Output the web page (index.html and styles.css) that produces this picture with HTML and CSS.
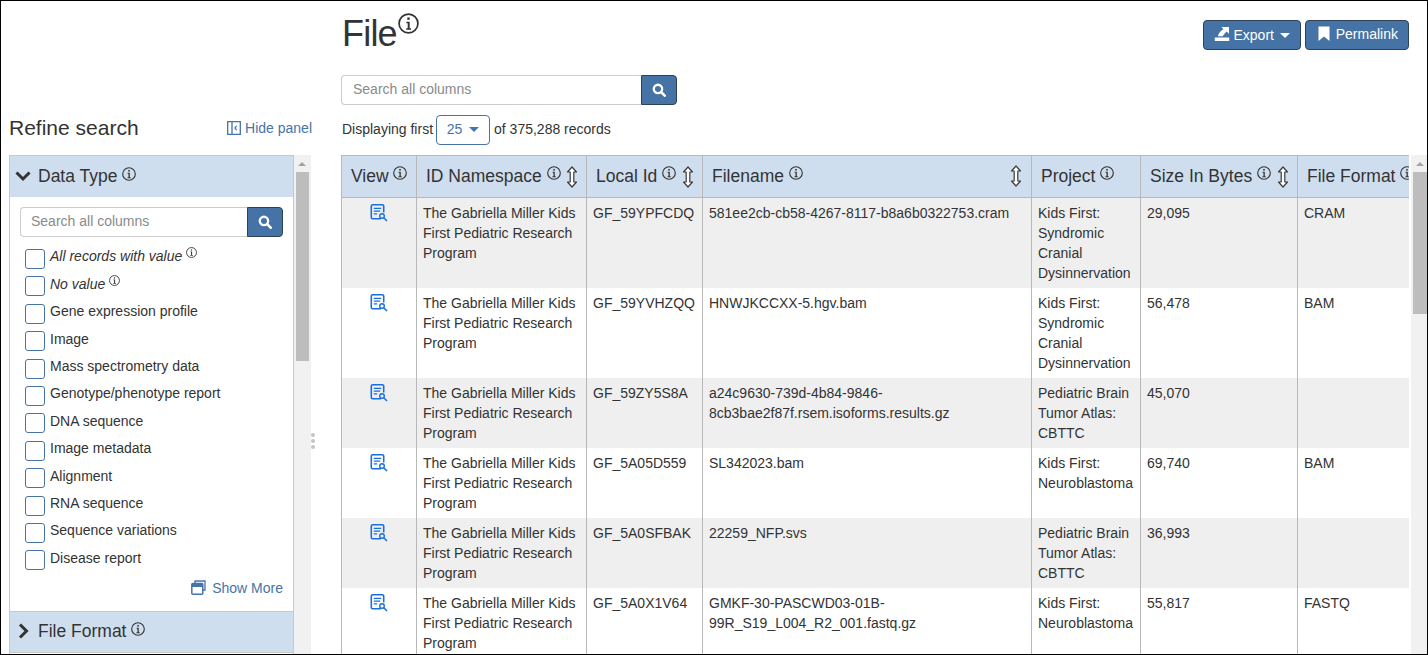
FILE: index.html
```html
<!DOCTYPE html>
<html lang="en">
<head>
    <meta charset="UTF-8">
    <meta name="viewport" content="width=device-width, initial-scale=1.0">
    <title>File</title>
    <link rel="stylesheet" href="styles.css">
</head>
<body>
    <svg class="sprites" width="0" height="0">
        <symbol id="info" viewBox="0 0 16 16">
            <circle cx="8" cy="8" r="7.2" fill="none" stroke="currentColor" stroke-width="1.3"/>
            <rect x="7.1" y="3.4" width="1.8" height="1.8" fill="currentColor"/>
            <path d="M6.4 6.7h2.5v5h1v1.1H6.3v-1.1h1.1V7.8h-1z" fill="currentColor"/>
        </symbol>
        <symbol id="sort" viewBox="0 0 12 22">
            <path d="M6 1 1.500 6h2.700v10H1.500L6 21l4.500-5H7.800V6h2.700z" fill="#fff" stroke="#3a3a3a" stroke-width="1.200" stroke-linejoin="round"/>
        </symbol>
        <symbol id="search" viewBox="0 0 16 16">
            <circle cx="6.800" cy="6.800" r="4.800" fill="none" stroke="currentColor" stroke-width="2.600"/>
            <path d="m10.500 10.500 4 4" stroke="currentColor" stroke-width="3" stroke-linecap="round"/>
        </symbol>
        <symbol id="doc" viewBox="0 0 18 18">
            <path d="M11 14.800H2.600a1.300 1.300 0 0 1-1.300-1.300V1.900A1.300 1.300 0 0 1 2.600.8h9.800a1.300 1.300 0 0 1 1.300 1.100v6.500" fill="none" stroke="#1a6fe0" stroke-width="1.600"/>
            <path d="M3.800 4.400h7.400M3.800 7.100h6.400M3.800 9.800h3.400" stroke="#1a6fe0" stroke-width="1.300"/>
            <circle cx="12" cy="12" r="2.300" fill="none" stroke="#1a6fe0" stroke-width="1.400"/>
            <path d="m13.700 13.700 3.300 3.300" stroke="#1a6fe0" stroke-width="1.600"/>
        </symbol>
    </svg>

    <div class="page">
        <aside class="sidebar">
            <div class="refine-head">
                <h2 class="refine-title">Refine search</h2>
                <a class="link hide-panel">
                    <svg class="ico-14" viewBox="0 0 14 14"><path d="M.7.7h12.600v12.600H.7zM5 .7v12.600" fill="none" stroke="#4674a9" stroke-width="1.300"/><path d="M9.700 5 7.800 7l1.900 2" fill="none" stroke="#4674a9" stroke-width="1.100"/></svg>
                    Hide panel
                </a>
            </div>
            <div class="facet-wrap">
                <div class="facets">
                    <div class="facet-head">
                        <svg class="chev" viewBox="0 0 16 16"><path d="M1.500 4.500 8 11l6.500-6.500" fill="none" stroke="#333" stroke-width="3"/></svg>
                        <span>Data Type</span>
                        <svg class="info-h"><use href="#info"/></svg>
                    </div>
                    <div class="facet-body">
                        <div class="search-group small">
                            <input class="search-input" type="text" placeholder="Search all columns">
                            <button class="search-btn"><svg class="ico-14"><use href="#search"/></svg></button>
                        </div>
                        <ul class="options">
                            <li><span class="check"></span><span><em>All records with value</em> <svg class="info-s"><use href="#info"/></svg></span></li>
                            <li><span class="check"></span><span><em>No value</em> <svg class="info-s"><use href="#info"/></svg></span></li>
                            <li><span class="check"></span><span>Gene expression profile</span></li>
                            <li><span class="check"></span><span>Image</span></li>
                            <li><span class="check"></span><span>Mass spectrometry data</span></li>
                            <li><span class="check"></span><span>Genotype/phenotype report</span></li>
                            <li><span class="check"></span><span>DNA sequence</span></li>
                            <li><span class="check"></span><span>Image metadata</span></li>
                            <li><span class="check"></span><span>Alignment</span></li>
                            <li><span class="check"></span><span>RNA sequence</span></li>
                            <li><span class="check"></span><span>Sequence variations</span></li>
                            <li><span class="check"></span><span>Disease report</span></li>
                        </ul>
                        <a class="link show-more">
                            <svg class="ico-15" viewBox="0 0 15 15"><path d="M4 3V1h10v9h-2" fill="none" stroke="#4674a9" stroke-width="1.300"/><rect x=".8" y="3.500" width="11" height="10.700" rx="1" fill="none" stroke="#4674a9" stroke-width="1.500"/><rect x=".8" y="3.500" width="11" height="3.500" fill="#4674a9"/></svg>
                            Show More
                        </a>
                    </div>
                    <div class="facet-head closed">
                        <svg class="chev" viewBox="0 0 16 16"><path d="M5 1.500 11.500 8 5 14.500" fill="none" stroke="#333" stroke-width="3"/></svg>
                        <span>File Format</span>
                        <svg class="info-h"><use href="#info"/></svg>
                    </div>
                </div>
                <div class="scrollbar side-bar">
                    <span class="arrow"></span>
                    <span class="thumb"></span>
                </div>
            </div>
            <div class="drag-dots"><i></i><i></i><i></i></div>
        </aside>

        <main class="main">
            <div class="title-row">
                <h1 class="title">File<svg class="info-t"><use href="#info"/></svg></h1>
                <div class="actions">
                    <button class="btn">
                        <svg class="ico-16 export" viewBox="0 0 16 16"><path d="M.8 11.500h14.400V15H.8zM7.500 1H15v6.800l-2.500-2.400L8.500 10.300H4c.4-2.900 2.100-5.300 5.400-7.100z" fill="#fff"/></svg>
                        Export <span class="caret"></span>
                    </button>
                    <button class="btn">
                        <svg class="ico-16" viewBox="0 0 12 16"><path d="M.5.500h11V15L6 10.500.5 15z" fill="#fff"/></svg>
                        <span class="btn-up">Permalink</span>
                    </button>
                </div>
            </div>
            <div class="search-group large">
                <input class="search-input" type="text" placeholder="Search all columns">
                <button class="search-btn"><svg class="ico-14"><use href="#search"/></svg></button>
            </div>
            <div class="display-row">
                <span>Displaying first</span>
                <span class="page-size">25 <span class="caret blue"></span></span>
                <span>of 375,288 records</span>
            </div>
            <div class="table-wrap">
                <div class="table-clip">
                    <table class="results">
                        <colgroup>
                            <col class="c-view"><col class="c-ns"><col class="c-id"><col class="c-file"><col class="c-proj"><col class="c-size"><col class="c-format">
                        </colgroup>
                        <thead>
                            <tr>
                                <th>View <svg class="info-h"><use href="#info"/></svg></th>
                                <th>ID Namespace <svg class="info-h"><use href="#info"/></svg> <svg class="sort"><use href="#sort"/></svg></th>
                                <th>Local Id <svg class="info-h"><use href="#info"/></svg> <svg class="sort"><use href="#sort"/></svg></th>
                                <th><div class="th-split"><span>Filename <svg class="info-h"><use href="#info"/></svg></span><svg class="sort"><use href="#sort"/></svg></div></th>
                                <th>Project <svg class="info-h"><use href="#info"/></svg></th>
                                <th>Size In Bytes <svg class="info-h"><use href="#info"/></svg> <svg class="sort"><use href="#sort"/></svg></th>
                                <th>File Format <svg class="info-h"><use href="#info"/></svg></th>
                            </tr>
                        </thead>
                        <tbody>
                            <tr>
                                <td class="view"><svg class="doc"><use href="#doc"/></svg></td>
                                <td>The Gabriella Miller Kids First Pediatric Research Program</td>
                                <td>GF_59YPFCDQ</td>
                                <td>581ee2cb-cb58-4267-8117-b8a6b0322753.cram</td>
                                <td>Kids First: Syndromic Cranial Dysinnervation</td>
                                <td>29,095</td>
                                <td>CRAM</td>
                            </tr>
                            <tr>
                                <td class="view"><svg class="doc"><use href="#doc"/></svg></td>
                                <td>The Gabriella Miller Kids First Pediatric Research Program</td>
                                <td>GF_59YVHZQQ</td>
                                <td>HNWJKCCXX-5.hgv.bam</td>
                                <td>Kids First: Syndromic Cranial Dysinnervation</td>
                                <td>56,478</td>
                                <td>BAM</td>
                            </tr>
                            <tr>
                                <td class="view"><svg class="doc"><use href="#doc"/></svg></td>
                                <td>The Gabriella Miller Kids First Pediatric Research Program</td>
                                <td>GF_59ZY5S8A</td>
                                <td>a24c9630-739d-4b84-9846-<br>8cb3bae2f87f.rsem.isoforms.results.gz</td>
                                <td>Pediatric Brain Tumor Atlas: CBTTC</td>
                                <td>45,070</td>
                                <td></td>
                            </tr>
                            <tr>
                                <td class="view"><svg class="doc"><use href="#doc"/></svg></td>
                                <td>The Gabriella Miller Kids First Pediatric Research Program</td>
                                <td>GF_5A05D559</td>
                                <td>SL342023.bam</td>
                                <td>Kids First: Neuroblastoma</td>
                                <td>69,740</td>
                                <td>BAM</td>
                            </tr>
                            <tr>
                                <td class="view"><svg class="doc"><use href="#doc"/></svg></td>
                                <td>The Gabriella Miller Kids First Pediatric Research Program</td>
                                <td>GF_5A0SFBAK</td>
                                <td>22259_NFP.svs</td>
                                <td>Pediatric Brain Tumor Atlas: CBTTC</td>
                                <td>36,993</td>
                                <td></td>
                            </tr>
                            <tr>
                                <td class="view"><svg class="doc"><use href="#doc"/></svg></td>
                                <td>The Gabriella Miller Kids First Pediatric Research Program</td>
                                <td>GF_5A0X1V64</td>
                                <td>GMKF-30-PASCWD03-01B-<br>99R_S19_L004_R2_001.fastq.gz</td>
                                <td>Kids First: Neuroblastoma</td>
                                <td>55,817</td>
                                <td>FASTQ</td>
                            </tr>
                        </tbody>
                    </table>
                </div>
                <div class="scrollbar main-bar">
                    <span class="arrow"></span>
                    <span class="thumb"></span>
                </div>
            </div>
        </main>
    </div>
</body>
</html>
```

FILE: styles.css
```css
* { box-sizing: border-box; }

html, body {
    margin: 0;
    height: 100%;
    overflow: hidden;
}

body {
    font-family: "Liberation Sans", Arial, sans-serif;
    font-size: 14px;
    line-height: 20px;
    color: #333;
    background: #fff;
}

.sprites { position: absolute; }

.page {
    display: flex;
    height: 655px;
    border: 1px solid #000;
    overflow: hidden;
}

.link { color: #4674a9; }

.ico-14 { width: 14px; height: 14px; vertical-align: -2px; }
.ico-15 { width: 15px; height: 15px; vertical-align: -2px; margin-right: 2px; }
.ico-16 { width: 16px; height: 16px; vertical-align: -2px; }

.info-h { width: 14px; height: 14px; vertical-align: 2px; color: #333; }
.info-s { width: 11px; height: 11px; vertical-align: 3px; color: #333; }
.info-t { width: 21px; height: 21px; vertical-align: 12px; color: #333; margin-left: 1px; }

/* left panel */
.sidebar {
    position: relative;
    flex: none;
    width: 340px;
    padding: 0 0 0 8px;
}

.refine-head {
    display: flex;
    justify-content: space-between;
    align-items: center;
    width: 303px;
    height: 28px;
    margin-top: 113px;
    margin-bottom: 13px;
}

.refine-title {
    margin: 0;
    font-size: 21px;
    font-weight: 400;
}

.hide-panel { font-size: 14px; }

.facet-wrap {
    display: flex;
    width: 302px;
    height: 510px;
}

.facets {
    width: 285px;
    height: 510px;
    border: 1px solid #c8c8c8;
    border-bottom: 0;
    overflow: hidden;
}

.facet-head {
    display: flex;
    align-items: center;
    gap: 5px;
    height: 41px;
    padding-left: 5px;
    padding-bottom: 2px;
    background: #cfdeef;
    font-size: 17.5px;
}

.facet-head .info-h { margin-bottom: 4px; }

.facet-head.closed {
    height: 42px;
    border-top: 1px solid #c8c8c8;
    border-bottom: 1px solid #c8c8c8;
}

.chev { width: 16px; height: 16px; margin-right: 2px; }

.facet-body {
    height: 414px;
    padding: 10px 10px 0 10px;
}

.search-group {
    display: flex;
    height: 30px;
}

.search-group.small { width: 263px; }
.search-group.large { width: 336px; }

.search-input {
    flex: 1;
    min-width: 0;
    height: 30px;
    padding: 0 10px 2px;
    border: 1px solid #ccc;
    border-right: 0;
    border-radius: 4px 0 0 4px;
    font: inherit;
    color: #333;
    outline: none;
}

.large .search-input { padding-left: 11px; }

.search-input::placeholder { color: #8a8a8a; opacity: 1; }

.search-btn {
    flex: none;
    width: 36px;
    height: 30px;
    padding: 0;
    border: 1px solid #2f4157;
    border-radius: 0 4px 4px 0;
    background: #4673a5;
    color: #fff;
}

.options {
    list-style: none;
    margin: 9.400px 0 0;
    padding: 0 0 0 5px;
}

.options li {
    display: flex;
    gap: 5px;
    height: 27.400px;
}

.check {
    flex: none;
    width: 20px;
    height: 20px;
    margin-top: 2.600px;
    border: 1px solid #4674a9;
    border-radius: 3px;
    background: #fff;
}

.show-more {
    display: block;
    margin-top: 3px;
    text-align: right;
}

/* fake scrollbars */
.scrollbar {
    position: relative;
    flex: none;
    width: 17px;
    background: #f1f1f1;
}

.scrollbar .arrow {
    position: absolute;
    top: 7px;
    left: 4px;
    border-left: 4px solid transparent;
    border-right: 4px solid transparent;
    border-bottom: 4px solid #a3a3a3;
}

.scrollbar .thumb {
    position: absolute;
    left: 2px;
    right: 2px;
    top: 17px;
    background: #bdbdbd;
}

.side-bar .thumb { height: 189px; }
.main-bar .thumb { height: 142px; right: 0; }

.drag-dots {
    position: absolute;
    left: 310px;
    top: 432px;
    display: flex;
    flex-direction: column;
    gap: 2px;
}

.drag-dots i {
    width: 4px;
    height: 4px;
    border-radius: 50%;
    background: #c4c4c4;
}

/* main area */
.main {
    flex: 1;
    min-width: 0;
}

.title-row {
    display: flex;
    justify-content: space-between;
    height: 74px;
    padding-right: 18px;
}

.title {
    margin: 12px 0 0;
    padding-left: 1px;
    font-size: 36px;
    font-weight: 400;
    line-height: 40px;
    letter-spacing: -0.800px;
}

.actions {
    display: flex;
    gap: 4px;
    margin-top: 19px;
}

.btn {
    height: 30px;
    padding: 0 10px;
    border: 1px solid #2f4157;
    border-radius: 4px;
    background: #4673a5;
    color: #fff;
    font: inherit;
}

.btn-up { position: relative; top: -1px; }

.caret {
    display: inline-block;
    margin-left: 2px;
    vertical-align: 2px;
    border-left: 5px solid transparent;
    border-right: 5px solid transparent;
    border-top: 5px solid #fff;
}

.caret.blue { border-top-color: #4674a9; margin-left: 3px; }

.display-row {
    display: flex;
    align-items: flex-start;
    gap: 3px;
    height: 30px;
    padding-left: 1px;
    margin-top: 10px;
    margin-bottom: 10px;
    line-height: 28px;
}

.page-size {
    width: 54px;
    height: 30px;
    margin: 0 1px 0 0;
    border: 1px solid #4674a9;
    border-radius: 4px;
    color: #4674a9;
    line-height: 26px;
    text-align: center;
}

.table-wrap {
    display: flex;
    height: 500px;
}

.table-clip {
    width: 1069px;
    overflow: hidden;
}

.main-bar { margin-left: 2px; width: 16px; }
.main-bar .arrow { left: 5px; }

.results {
    table-layout: fixed;
    width: 1120px;
    border-collapse: collapse;
}

.c-view { width: 75px; }
.c-ns { width: 170px; }
.c-id { width: 116px; }
.c-file { width: 329px; }
.c-proj { width: 109px; }
.c-size { width: 157px; }
.c-format { width: 164px; }

.results th {
    height: 42px;
    padding: 0 9px 2px;
    border: 1px solid #b8b8b8;
    background: #cfdeef;
    font-size: 17.500px;
    font-weight: 400;
    text-align: left;
    white-space: nowrap;
}

.th-split {
    display: flex;
    justify-content: space-between;
    align-items: center;
}

.sort { width: 12px; height: 22px; vertical-align: middle; margin: -4px 0 -4px 1px; }

.results td {
    padding: 5px 6px;
    border-left: 1px solid #b8b8b8;
    border-right: 1px solid #b8b8b8;
    vertical-align: top;
}

.results tbody tr:nth-child(odd) td { background: #efefef; }

.results td.view { text-align: center; }

.doc { width: 18px; height: 18px; vertical-align: top; margin-top: 1px; }
```
